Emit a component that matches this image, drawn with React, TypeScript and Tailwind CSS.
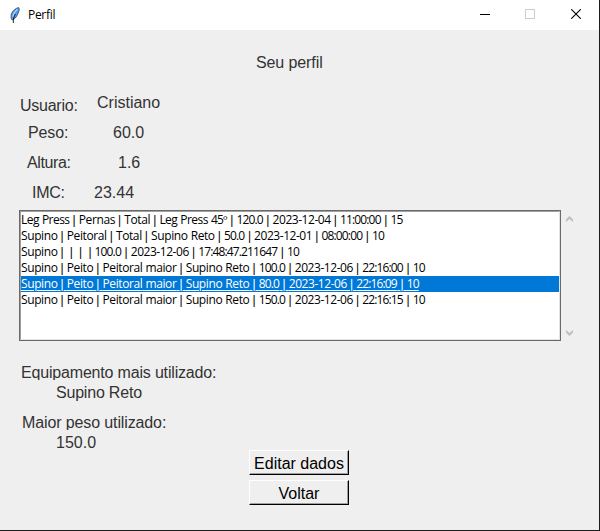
const rows = [
  { text: "Leg Press | Pernas | Total | Leg Press 45º | 120.0 | 2023-12-04 | 11:00:00 | 15", selected: false },
  { text: "Supino | Peitoral | Total | Supino Reto | 50.0 | 2023-12-01 | 08:00:00 | 10", selected: false },
  { text: "Supino |  |  |  | 100.0 | 2023-12-06 | 17:48:47.211647 | 10", selected: false },
  { text: "Supino | Peito | Peitoral maior | Supino Reto | 100.0 | 2023-12-06 | 22:16:00 | 10", selected: false },
  { text: "Supino | Peito | Peitoral maior | Supino Reto | 80.0 | 2023-12-06 | 22:16:09 | 10", selected: true },
  { text: "Supino | Peito | Peitoral maior | Supino Reto | 150.0 | 2023-12-06 | 22:16:15 | 10", selected: false },
];

function Feather() {
  return (
    <svg width="10" height="17" viewBox="0 0 10 17" className="ml-[10px] shrink-0">
      <path d="M8.8.6C6.2.8 2.6 3.6 1.4 7 .7 9 .9 11 2 13l1.4-.4C6 11 7.6 8 8.8 4.5 9.4 2.8 9.5 1.5 8.8.6Z" fill="#4f9af5" stroke="#30363f" strokeWidth="0.7" />
      <path d="M7.4 1.8C5.2 4.2 3.2 7 2.6 10" stroke="#b9d6f5" strokeWidth="1.1" fill="none" />
      <path d="M5.4 7C4 9.5 3.2 12 3.3 16" stroke="#111" strokeWidth="0.9" fill="none" />
    </svg>
  );
}

function TitleBar() {
  return (
    <header className="flex h-[30px] items-center bg-white">
      <Feather />
      <h1 className="ml-2 font-['Open_Sans',sans-serif] text-[12px] leading-4 tracking-[-0.3px] text-black">Perfil</h1>
      <svg width="10" height="10" viewBox="0 0 10 10" className="ml-auto" shapeRendering="crispEdges">
        <path d="M0 4h10v1H0z" fill="#000" />
      </svg>
      <svg width="10" height="10" viewBox="0 0 10 10" className="mb-[2px] ml-[35px]" shapeRendering="crispEdges">
        <path d="M.5.5h9v9h-9z" fill="none" stroke="#ccc" />
      </svg>
      <svg width="10" height="10" viewBox="0 0 10 10" className="mr-[18px] mb-[2px] ml-9">
        <path d="M.2.2l9.6 9.6M9.8.2L.2 9.8" stroke="#000" strokeWidth="1.1" />
      </svg>
    </header>
  );
}

function Arrow({ down = false }: { down?: boolean }) {
  return (
    <svg width="7" height="6" viewBox="0 0 7 6" className={down ? "rotate-180" : ""}>
      <path d="M0 6V3.4L3.5 0 7 3.4V6L3.5 2.9Z" fill="#bfbfbf" />
    </svg>
  );
}

function tokenClass(token: string) {
  if (token === "|") return "font-['Liberation_Sans',sans-serif] tracking-normal";
  if (/^\d+-/.test(token)) return "tracking-[-0.45px]";
  if (/^\d/.test(token)) return "mr-[0.5px] tracking-[-0.85px]";
  if (token === "Leg" || token === "Press") return "tracking-[-0.55px]";
  return "";
}

function Record({ text, selected }: { text: string; selected: boolean }) {
  return (
    <li className={selected ? "h-4 bg-[#0078d7] text-white" : "h-4 text-black"}>
      <span className={selected ? "underline underline-offset-2" : ""}>
        {text.split(/(\s+)/).map((token, i) => (
          <span key={i} className={tokenClass(token)}>{token}</span>
        ))}
      </span>
    </li>
  );
}

function TkButton({ children }: { children: string }) {
  return (
    <button className="flex h-[25px] w-[100px] items-center justify-center border border-t-white border-r-black border-b-black border-l-white pt-[2px] whitespace-nowrap text-black shadow-[inset_-1px_-1px_0_#a0a0a0]">
      {children}
    </button>
  );
}

export default function App() {
  return (
    <div className="flex h-[531px] w-[600px] flex-col overflow-hidden border-r border-b border-[#1c1c1c] bg-[#efefef] font-['Liberation_Sans',Arial,sans-serif] text-[16px] leading-[18px] text-[#333]">
      <TitleBar />
      <h2 className="mt-6 ml-[256px] tracking-[-0.1px]">Seu perfil</h2>
      <section className="mt-[22px] flex h-[114px] whitespace-nowrap">
        <div className="w-[93px] pt-[3px] tracking-[-0.25px]">
          <div className="ml-5">Usuario:</div>
          <div className="mt-[9px] ml-7 tracking-[-0.1px]">Peso:</div>
          <div className="mt-3 ml-[27px] tracking-[-0.4px]">Altura:</div>
          <div className="mt-3 ml-8">IMC:</div>
        </div>
        <div>
          <div className="ml-1">Cristiano</div>
          <div className="mt-3 ml-5">60.0</div>
          <div className="mt-3 ml-[25px]">1.6</div>
          <div className="mt-3 ml-px">23.44</div>
        </div>
      </section>
      <section className="mt-[2px] ml-[19px] flex h-[131px]">
        <div className="w-[542px] border border-[#696969] bg-white">
          <ul className="h-full border border-t-[#a0a0a0] border-r-[#e3e3e3] border-b-[#e3e3e3] border-l-[#a0a0a0] font-['Open_Sans',sans-serif] text-[12px] leading-4 tracking-[-0.4px] whitespace-pre [word-spacing:0.35px]">
            {rows.map((row) => (
              <Record key={row.text} text={row.text} selected={row.selected} />
            ))}
          </ul>
        </div>
        <div className="ml-[5px] flex flex-col justify-between pt-[6px] pb-[5px]">
          <Arrow />
          <Arrow down />
        </div>
      </section>
      <section className="mt-[23px] whitespace-nowrap">
        <div className="ml-[21px] h-4 overflow-hidden tracking-[-0.18px]">Equipamento mais utilizado:</div>
        <div className="mt-1 ml-14 tracking-[-0.2px]">Supino Reto</div>
        <div className="mt-3 ml-[22px] h-4 overflow-hidden tracking-[-0.12px]">Maior peso utilizado:</div>
        <div className="mt-1 ml-14">150.0</div>
      </section>
      <nav className="-mt-[2px] ml-[249px] flex flex-col gap-[5px]">
        <TkButton>Editar dados</TkButton>
        <TkButton>Voltar</TkButton>
      </nav>
    </div>
  );
}
